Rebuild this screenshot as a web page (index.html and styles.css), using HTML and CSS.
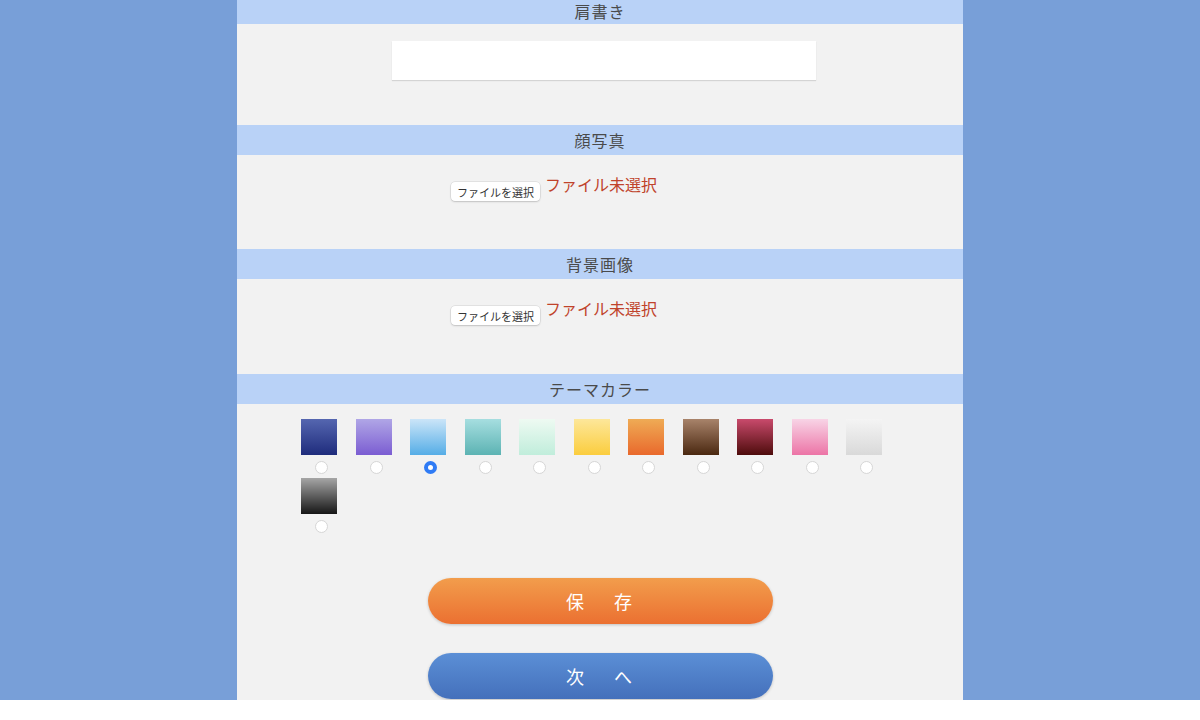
FILE: index.html
```html
<!DOCTYPE html>
<html lang="ja">
<head>
  <meta charset="UTF-8">
  <meta name="viewport" content="width=device-width, initial-scale=1.0">
  <title>プロフィール編集</title>
  <link rel="stylesheet" href="styles.css">
</head>
<body>
  <div class="page">
    <form class="editor">
      <h2 class="section-title">肩書き</h2>
      <div class="section-body body-text">
        <input type="text" class="text-input" name="title">
      </div>

      <h2 class="section-title">顔写真</h2>
      <div class="section-body body-file">
        <div class="file-row">
          <button type="button" class="file-btn">ファイルを選択</button>
          <span class="file-name">ファイル未選択</span>
        </div>
      </div>

      <h2 class="section-title">背景画像</h2>
      <div class="section-body body-file body-file-last">
        <div class="file-row">
          <button type="button" class="file-btn">ファイルを選択</button>
          <span class="file-name">ファイル未選択</span>
        </div>
      </div>

      <h2 class="section-title">テーマカラー</h2>
      <div class="section-body body-theme">
        <div class="swatches">
          <label class="swatch"><span class="chip chip-navy"></span><input type="radio" name="theme"></label>
          <label class="swatch"><span class="chip chip-purple"></span><input type="radio" name="theme"></label>
          <label class="swatch"><span class="chip chip-sky"></span><input type="radio" name="theme" checked></label>
          <label class="swatch"><span class="chip chip-teal"></span><input type="radio" name="theme"></label>
          <label class="swatch"><span class="chip chip-mint"></span><input type="radio" name="theme"></label>
          <label class="swatch"><span class="chip chip-yellow"></span><input type="radio" name="theme"></label>
          <label class="swatch"><span class="chip chip-orange"></span><input type="radio" name="theme"></label>
          <label class="swatch"><span class="chip chip-brown"></span><input type="radio" name="theme"></label>
          <label class="swatch"><span class="chip chip-wine"></span><input type="radio" name="theme"></label>
          <label class="swatch"><span class="chip chip-pink"></span><input type="radio" name="theme"></label>
          <label class="swatch"><span class="chip chip-silver"></span><input type="radio" name="theme"></label>
          <label class="swatch"><span class="chip chip-black"></span><input type="radio" name="theme"></label>
        </div>

        <div class="actions">
          <button type="submit" class="btn btn-save">保　存</button>
          <button type="button" class="btn btn-next">次　へ</button>
        </div>
      </div>
    </form>
  </div>
</body>
</html>
```

FILE: styles.css
```css
html, body {
  margin: 0;
  padding: 0;
}
body {
  background-color: #ffffff;
  font-family: "Noto Sans CJK JP", "Noto Sans", sans-serif;
}
.page {
  height: 700px;
  overflow: hidden;
  background-color: #789fd8;
}
.editor {
  width: 726px;
  margin: 0 auto;
  background-color: #f2f2f2;
  min-height: 720px;
}
.section-title {
  margin: 0;
  height: 30px;
  line-height: 30px;
  background-color: #b9d2f7;
  color: #4a4a4a;
  font-size: 16px;
  font-weight: normal;
  letter-spacing: 1px;
  text-align: center;
}
.section-title:first-child {
  height: 24px;
  line-height: 22px;
}
.section-body {
  box-sizing: border-box;
  padding-top: 17px;
}
.body-text {
  height: 101px;
  padding-left: 8px;
}
.body-file {
  height: 94px;
}
.body-file-last {
  height: 95px;
}
.text-input {
  display: block;
  box-sizing: border-box;
  width: 424px;
  height: 39px;
  margin: 0 auto;
  border: none;
  background-color: #fff;
  box-shadow: 0 1px 1px rgba(0, 0, 0, 0.12);
}
.file-row {
  display: flex;
  justify-content: center;
  align-items: flex-start;
  gap: 5px;
  padding-right: 92px;
}
.file-btn {
  margin-top: 10px;
  height: 19px;
  padding: 0 6px;
  font-family: inherit;
  font-size: 11px;
  color: #333;
  background-color: #fff;
  border: none;
  border-radius: 4px;
  box-shadow: 0 0 0 0.5px rgba(0, 0, 0, 0.12), 0 1px 2px rgba(0, 0, 0, 0.15);
}
.file-name {
  font-size: 16px;
  line-height: 24px;
  color: #c0432b;
}
.body-theme {
  padding-top: 15px;
}
.swatches {
  width: 600px;
  margin: 0 auto;
  padding-left: 2px;
  display: flex;
  flex-wrap: wrap;
}
.swatch {
  width: 54.5px;
  height: 59px;
  display: flex;
  flex-direction: column;
}
.chip {
  width: 36px;
  height: 36px;
}
.swatch input {
  appearance: none;
  -webkit-appearance: none;
  box-sizing: border-box;
  width: 13px;
  height: 13px;
  margin: 6px 0 0 14px;
  border-radius: 50%;
  border: 1px solid #d6d6d6;
  background-color: #fff;
}
.swatch input:checked {
  border: 4px solid #2f7bf5;
}
.chip-navy { background: linear-gradient(#5566b0, #1f2c7c); }
.chip-purple { background: linear-gradient(#b0a6e6, #7b5dd2); }
.chip-sky { background: linear-gradient(#cbe5f8, #55ade6); }
.chip-teal { background: linear-gradient(#a6dee0, #5cb3b3); }
.chip-mint { background: linear-gradient(#eefaf2, #c0eddb); }
.chip-yellow { background: linear-gradient(#fde79a, #fbcd3e); }
.chip-orange { background: linear-gradient(#efab55, #e9692c); }
.chip-brown { background: linear-gradient(#a8836a, #4a2810); }
.chip-wine { background: linear-gradient(#c94a6c, #4e0c0c); }
.chip-pink { background: linear-gradient(#f8d4e6, #ec74a6); }
.chip-silver { background: linear-gradient(#f4f4f4, #d9d9d9); }
.chip-black { background: linear-gradient(#a6a6a6, #161616); }
.actions {
  display: flex;
  flex-direction: column;
  align-items: center;
  gap: 29px;
  margin-top: 41px;
}
.btn {
  width: 345px;
  height: 46px;
  border: none;
  border-radius: 23px;
  color: #fff;
  font-family: inherit;
  font-size: 18px;
  letter-spacing: 6px;
  text-indent: 4px;
  box-shadow: 0 1px 3px rgba(0, 0, 0, 0.2);
  cursor: pointer;
}
.btn-save {
  background: linear-gradient(#f29d4c, #eb7031);
}
.btn-next {
  background: linear-gradient(#5b8fd6, #4470bb);
}
```
